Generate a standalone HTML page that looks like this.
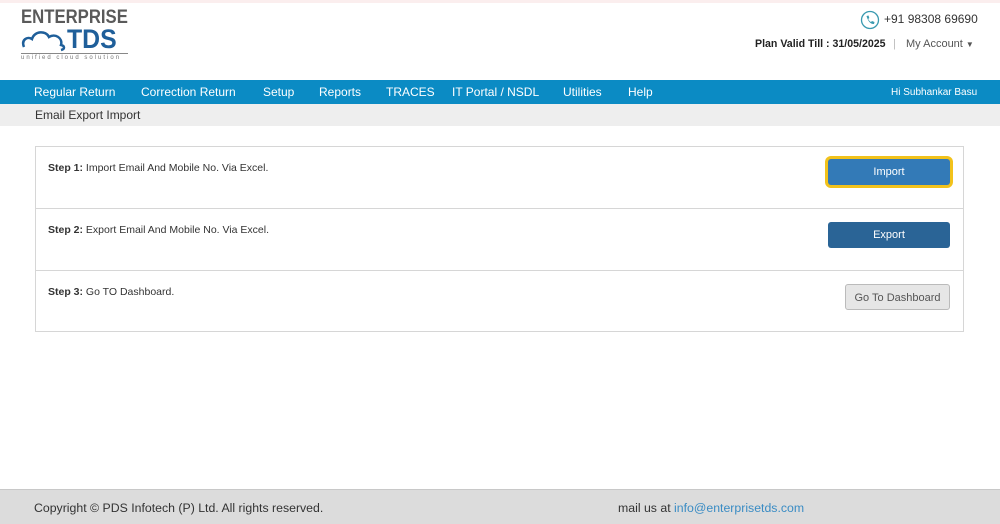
<!DOCTYPE html>
<html><head><style>
*{margin:0;padding:0;box-sizing:border-box}
body{width:1000px;height:524px;overflow:hidden;background:#fff;font-family:"Liberation Sans",sans-serif;position:relative;color:#333}
.topline{position:absolute;top:0;left:0;width:1000px;height:3px;background:#fbeeee}
.logo{position:absolute;left:21px;top:9px;width:110px;height:55px}
.nav{position:absolute;top:80px;left:0;width:1000px;height:24px;background:#0b8bc4;color:#fff;font-size:12px}
.nav span{position:absolute;top:5px}
.crumb{position:absolute;top:104px;left:0;width:1000px;height:22px;background:#eeeeee;font-size:12px;padding:4px 0 0 35px;color:#333}
.panel{position:absolute;left:35px;top:146px;width:929px;height:186px;border:1px solid #d6d6d6}
.row{position:absolute;left:0;width:927px;height:62px;border-bottom:1px solid #d6d6d6;font-size:10.5px}
.row .t{position:absolute;left:12px;top:15px}
.btn{position:absolute;right:13px;width:122px;height:26px;border-radius:3px;color:#fff;font-size:11px;text-align:center;line-height:26px}
.foot{position:absolute;top:489px;left:0;width:1000px;height:35px;background:#dcdcdc;border-top:1px solid #c8c8c8;font-size:12.3px;color:#333}
</style></head><body>
<div class="topline"></div>
<div class="logo">
<div style="position:absolute;left:0;top:0;font-size:19px;font-weight:bold;color:#5a5a5a;line-height:18px;transform:scaleX(0.88);transform-origin:left;white-space:nowrap">ENTERPRISE</div>
<svg width="50" height="26" style="position:absolute;left:0;top:17px"><path d="M3 21 C0 14 6 10 11 13 C13 5 25 4 28 11 C34 7 42 12 40 19 C44 20 44 23 40 24" fill="none" stroke="#1f5f9a" stroke-width="2.5"/></svg>
<div style="position:absolute;left:46px;top:16px;font-size:27px;font-weight:bold;color:#1f5f9a;line-height:28px;transform:scaleX(0.92);transform-origin:left">TDS</div>
<div style="position:absolute;left:0;top:44px;width:107px;border-top:1px solid #888"></div>
<div style="position:absolute;left:0;top:46px;font-size:6px;color:#777;letter-spacing:2px;white-space:nowrap">unified cloud solution</div>
</div>
<svg width="20" height="20" style="position:absolute;left:860px;top:10px"><circle cx="10" cy="10" r="8.5" fill="none" stroke="#3a9ab0" stroke-width="1.3"/><path d="M6.5 6 L8.5 5.5 L9.3 8 L8.2 9 Q9.5 11.5 11 12 L12 11 L14.5 12 L14 14 Q9 14.5 6.5 6Z" fill="#3a9ab0"/></svg>
<div style="position:absolute;left:884px;top:12px;font-size:12px;color:#333">+91 98308 69690</div>
<div style="position:absolute;left:755px;top:38px;font-size:10.6px;color:#222;font-weight:bold">Plan Valid Till : 31/05/2025</div>
<div style="position:absolute;left:893px;top:38px;font-size:11px;color:#bbb">|</div>
<div style="position:absolute;left:906px;top:38px;font-size:11px;color:#555">My Account <span style="font-size:8px">▼</span></div>
<div class="nav">
<span style="left:34px">Regular Return</span><span style="left:141px">Correction Return</span><span style="left:263px">Setup</span><span style="left:319px">Reports</span><span style="left:386px">TRACES</span><span style="left:452px">IT Portal / NSDL</span><span style="left:563px">Utilities</span><span style="left:628px">Help</span>
<span style="left:891px;font-size:10px;top:7px">Hi Subhankar Basu</span>
</div>
<div class="crumb">Email Export Import</div>
<div class="panel">
<div class="row" style="top:0"><div class="t"><b>Step 1:</b> Import Email And Mobile No. Via Excel.</div>
<div class="btn" style="top:12px;background:#337ab7;box-shadow:0 0 0 3px #f2c21b">Import</div></div>
<div class="row" style="top:62px"><div class="t"><b>Step 2:</b> Export Email And Mobile No. Via Excel.</div>
<div class="btn" style="top:13px;background:#2a6496">Export</div></div>
<div class="row" style="top:124px;border-bottom:none"><div class="t"><b>Step 3:</b> Go TO Dashboard.</div>
<div class="btn" style="top:13px;width:105px;background:#e6e6e6;border:1px solid #bbb;color:#555">Go To Dashboard</div></div>
</div>
<div class="foot">
<div style="position:absolute;left:34px;top:11px">Copyright © PDS Infotech (P) Ltd. All rights reserved.</div>
<div style="position:absolute;left:618px;top:11px">mail us at <span style="color:#3a8cc4">info@enterprisetds.com</span></div>
</div>
</body></html>
